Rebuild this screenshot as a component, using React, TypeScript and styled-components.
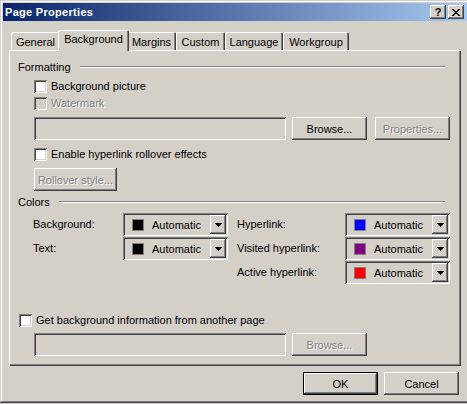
import styled, { createGlobalStyle } from "styled-components";

const GlobalStyle = createGlobalStyle`
  html, body {
    margin: 0;
    padding: 0;
    overflow: hidden;
    background: #d4d0c8;
  }
  body {
    font-family: Tahoma, "Liberation Sans", Arial, sans-serif;
    font-size: 11px;
    color: #000;
  }
`;

const RAISED =
  "inset -1px -1px #404040, inset 1px 1px #ffffff, inset -2px -2px #808080, inset 2px 2px #d4d0c8";
const SUNKEN =
  "inset 1px 1px #808080, inset -1px -1px #ffffff, inset 2px 2px #404040, inset -2px -2px #d4d0c8";

const Window = styled.div`
  width: 472px;
  height: 403px;
  box-sizing: border-box;
  padding: 3px;
  background: #d4d0c8;
  box-shadow: inset -1px -1px #404040, inset 1px 1px #d4d0c8, inset -2px -2px #808080,
    inset 2px 2px #ffffff;
  display: flex;
  flex-direction: column;
`;

const TitleBar = styled.div`
  height: 18px;
  display: flex;
  align-items: center;
  padding: 0 5px 0 2px;
  background: linear-gradient(to right, #0a246a, #a6caf0);
`;

const Title = styled.span`
  flex: 1;
  color: #fff;
  font-weight: bold;
  letter-spacing: 0.3px;
`;

const TitleButton = styled.div`
  width: 16px;
  height: 14px;
  box-sizing: border-box;
  margin-left: 2px;
  background: #d4d0c8;
  box-shadow: ${RAISED};
  display: flex;
  align-items: center;
  justify-content: center;
  font-weight: bold;
  font-size: 11px;
  line-height: 14px;
`;

const Body = styled.div`
  padding: 9px 8px 0 6px;
  display: flex;
  flex-direction: column;
`;

const TabRow = styled.div`
  height: 20px;
  display: flex;
  align-items: flex-end;
  margin-left: 2px;
`;

const Tab = styled.div<{ $active?: boolean; $w: number }>`
  position: relative;
  z-index: ${(p) => (p.$active ? 2 : 0)};
  box-sizing: border-box;
  width: ${(p) => (p.$active ? p.$w + 4 : p.$w)}px;
  height: ${(p) => (p.$active ? 21 : 18)}px;
  margin: ${(p) => (p.$active ? "0 -2px -1px" : "0")};
  padding-top: ${(p) => (p.$active ? 3 : 4)}px;
  line-height: 13px;
  text-align: center;
  background: #d4d0c8;
  border-radius: 2px 2px 0 0;
  box-shadow: inset 1px 1px #ffffff, inset -1px 0 #404040, inset -2px 0 #808080;
`;

const Panel = styled.div`
  position: relative;
  z-index: 1;
  width: 452px;
  height: 316px;
  box-sizing: border-box;
  padding-top: 10px;
  background: #d4d0c8;
  box-shadow: inset 1px 1px #ffffff, inset -1px -1px #404040, inset -2px -2px #808080;
  display: flex;
  flex-direction: column;
  align-items: flex-start;
`;

const GroupHeader = styled.div<{ $top?: number }>`
  align-self: stretch;
  display: flex;
  align-items: center;
  height: 14px;
  line-height: 14px;
  margin-top: ${(p) => p.$top ?? 0}px;
  padding: 0 16px 0 9px;
`;

const GroupLine = styled.div`
  flex: 1;
  margin-left: 9px;
  border-top: 1px solid #808080;
  border-bottom: 1px solid #ffffff;
`;

const CheckRow = styled.div<{ $top: number; $indent: number; $disabled?: boolean }>`
  display: flex;
  align-items: center;
  gap: 4px;
  height: 13px;
  line-height: 13px;
  margin: ${(p) => p.$top}px 0 0 ${(p) => p.$indent}px;
  color: ${(p) => (p.$disabled ? "#808080" : "#000")};
  text-shadow: ${(p) => (p.$disabled ? "1px 1px #ffffff" : "none")};
`;

const Box = styled.span<{ $disabled?: boolean }>`
  flex: none;
  width: 13px;
  height: 13px;
  box-sizing: border-box;
  background: ${(p) => (p.$disabled ? "#d4d0c8" : "#ffffff")};
  box-shadow: ${SUNKEN};
`;

const FieldRow = styled.div<{ $top: number }>`
  display: flex;
  gap: 6px;
  margin: ${(p) => p.$top}px 0 0 25px;
`;

const Field = styled.div`
  width: 252px;
  height: 23px;
  box-sizing: border-box;
  background: #d4d0c8;
  box-shadow: ${SUNKEN};
`;

const Button = styled.div<{ $w?: number; $disabled?: boolean; $default?: boolean; $gap?: number }>`
  width: ${(p) => p.$w ?? 75}px;
  height: 23px;
  box-sizing: border-box;
  margin-left: ${(p) => p.$gap ?? 0}px;
  display: flex;
  align-items: center;
  justify-content: center;
  background: #d4d0c8;
  color: ${(p) => (p.$disabled ? "#808080" : "#000")};
  text-shadow: ${(p) => (p.$disabled ? "1px 1px #ffffff" : "none")};
  box-shadow: ${(p) =>
    p.$default
      ? "inset 0 0 0 1px #000000, inset -2px -2px #404040, inset 2px 2px #ffffff, inset -3px -3px #808080"
      : RAISED};
`;

const RolloverButton = styled(Button)<{ $top: number }>`
  margin: ${(p) => p.$top}px 0 0 25px;
`;

const ColorsGrid = styled.div`
  display: grid;
  grid-template-columns: 90px 105px 117px 105px;
  grid-auto-rows: 23px;
  row-gap: 1px;
  margin: 4px 0 0 24px;
`;

const ColorLabel = styled.span<{ $right?: boolean }>`
  align-self: center;
  padding-left: ${(p) => (p.$right ? 9 : 0)}px;
  margin-top: -1px;
`;

const Spacer = styled.span`
  grid-column: span 2;
`;

const Combo = styled.div`
  width: 105px;
  height: 23px;
  box-sizing: border-box;
  padding: 2px;
  display: flex;
  align-items: center;
  background: #d4d0c8;
  box-shadow: ${SUNKEN};
`;

const Swatch = styled.span<{ $color: string }>`
  width: 12px;
  height: 12px;
  box-sizing: border-box;
  margin-left: 7px;
  border: 1px solid #808080;
  background: ${(p) => p.$color};
`;

const ComboText = styled.span`
  margin-left: 8px;
  flex: 1;
`;

const DropButton = styled.div`
  width: 16px;
  height: 19px;
  box-sizing: border-box;
  display: flex;
  align-items: center;
  justify-content: center;
  box-shadow: ${RAISED};
`;

const ButtonRow = styled.div`
  display: flex;
  justify-content: flex-end;
  margin-top: 6px;
  padding-right: 2px;
`;

const Arrow = () => (
  <svg width="7" height="4" shapeRendering="crispEdges">
    <rect x="0" y="0" width="7" height="1" fill="#000" />
    <rect x="1" y="1" width="5" height="1" fill="#000" />
    <rect x="2" y="2" width="3" height="1" fill="#000" />
    <rect x="3" y="3" width="1" height="1" fill="#000" />
  </svg>
);

const CloseGlyph = () => (
  <svg width="8" height="7" shapeRendering="crispEdges">
    {[
      [0, 0, 2], [6, 0, 2],
      [1, 1, 2], [5, 1, 2],
      [2, 2, 4],
      [3, 3, 2],
      [2, 4, 4],
      [1, 5, 2], [5, 5, 2],
      [0, 6, 2], [6, 6, 2],
    ].map(([x, y, w], i) => (
      <rect key={i} x={x} y={y} width={w} height="1" fill="#000" />
    ))}
  </svg>
);

const ColorCombo = ({ color }: { color: string }) => (
  <Combo>
    <Swatch $color={color} />
    <ComboText>Automatic</ComboText>
    <DropButton>
      <Arrow />
    </DropButton>
  </Combo>
);

const tabs = [
  { name: "General", w: 49 },
  { name: "Background", w: 67, active: true },
  { name: "Margins", w: 49 },
  { name: "Custom", w: 49 },
  { name: "Language", w: 58 },
  { name: "Workgroup", w: 66 },
];

const App = () => {
  return (
    <>
      <GlobalStyle />
      <Window>
        <TitleBar>
          <Title>Page Properties</Title>
          <TitleButton>?</TitleButton>
          <TitleButton>
            <CloseGlyph />
          </TitleButton>
        </TitleBar>
        <Body>
          <TabRow>
            {tabs.map((t) => (
              <Tab key={t.name} $w={t.w} $active={t.active}>
                {t.name}
              </Tab>
            ))}
          </TabRow>
          <Panel>
            <GroupHeader>
              Formatting
              <GroupLine />
            </GroupHeader>
            <CheckRow $top={6} $indent={25}>
              <Box />
              Background picture
            </CheckRow>
            <CheckRow $top={4} $indent={25} $disabled>
              <Box $disabled />
              Watermark
            </CheckRow>
            <FieldRow $top={7}>
              <Field />
              <Button>Browse...</Button>
              <Button $disabled $gap={2}>
                Properties...
              </Button>
            </FieldRow>
            <CheckRow $top={8} $indent={25}>
              <Box />
              Enable hyperlink rollover effects
            </CheckRow>
            <RolloverButton $top={7} $w={83} $disabled>
              Rollover style...
            </RolloverButton>
            <GroupHeader $top={4}>
              Colors
              <GroupLine />
            </GroupHeader>
            <ColorsGrid>
              <ColorLabel>Background:</ColorLabel>
              <ColorCombo color="#000000" />
              <ColorLabel $right>Hyperlink:</ColorLabel>
              <ColorCombo color="#0000ff" />
              <ColorLabel>Text:</ColorLabel>
              <ColorCombo color="#000000" />
              <ColorLabel $right>Visited hyperlink:</ColorLabel>
              <ColorCombo color="#800080" />
              <Spacer />
              <ColorLabel $right>Active hyperlink:</ColorLabel>
              <ColorCombo color="#ff0000" />
            </ColorsGrid>
            <CheckRow $top={30} $indent={10}>
              <Box />
              Get background information from another page
            </CheckRow>
            <FieldRow $top={6}>
              <Field />
              <Button $disabled>Browse...</Button>
            </FieldRow>
          </Panel>
          <ButtonRow>
            <Button $default>OK</Button>
            <Button $gap={6}>Cancel</Button>
          </ButtonRow>
        </Body>
      </Window>
    </>
  );
};

export default App;
